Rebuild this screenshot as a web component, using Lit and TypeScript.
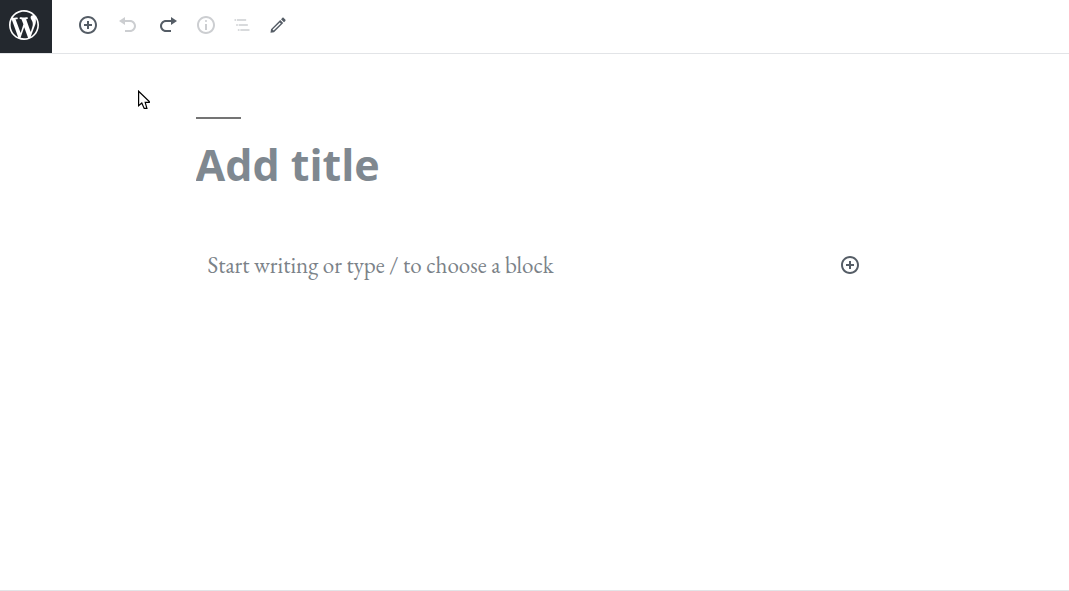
import { LitElement, html, css, svg } from "lit";
import { customElement, property } from "lit/decorators.js";

interface Glyph {
  box: number;
  path: string;
}

const glyphs: Record<string, Glyph> = {
  wordpress: {
    box: 20,
    path: "M20 10c0-5.51-4.49-10-10-10C4.48 0 0 4.49 0 10c0 5.52 4.48 10 10 10 5.51 0 10-4.48 10-10zM7.78 15.37L4.37 6.22c.55-.02 1.17-.08 1.17-.08.5-.06.44-1.13-.06-1.11 0 0-1.45.11-2.37.11-.18 0-.37 0-.58-.01C4.12 2.69 6.87 1.11 10 1.11c2.33 0 4.45.87 6.05 2.34-.68-.11-1.65.39-1.65 1.58 0 .74.45 1.36.9 2.1.35.61.55 1.36.55 2.46 0 1.49-1.4 5-1.4 5l-3.03-8.37c.54-.02.82-.17.82-.17.5-.05.44-1.25-.06-1.22 0 0-1.44.12-2.38.12-.87 0-2.33-.12-2.33-.12-.5-.03-.56 1.2-.06 1.22l.92.08 1.26 3.41zM17.41 10c.24-.64.74-1.87.43-4.25.7 1.29 1.05 2.71 1.05 4.25 0 3.29-1.73 6.24-4.4 7.78.97-2.59 1.94-5.2 2.92-7.78zM6.1 18.09C3.12 16.65 1.11 13.53 1.11 10c0-1.3.23-2.48.72-3.59C3.25 10.3 4.67 14.2 6.1 18.09zm4.03-6.63l2.58 6.98c-.86.29-1.76.45-2.71.45-.79 0-1.57-.11-2.29-.33.81-2.38 1.62-4.74 2.42-7.1z",
  },
  insert: {
    box: 20,
    path: "M10 1c-5 0-9 4-9 9s4 9 9 9 9-4 9-9-4-9-9-9zm0 16c-3.9 0-7-3.1-7-7s3.1-7 7-7 7 3.1 7 7-3.1 7-7 7zm1-11H9v3H6v2h3v3h2v-3h3V9h-3V6z",
  },
  undo: {
    box: 20,
    path: "M12 5H7V2L1 6l6 4V7h5c2.2 0 4 1.8 4 4s-1.8 4-4 4H7v2h5c3.3 0 6-2.7 6-6s-2.7-6-6-6z",
  },
  redo: {
    box: 20,
    path: "M8 5h5V2l6 4-6 4V7H8c-2.2 0-4 1.8-4 4s1.8 4 4 4h5v2H8c-3.3 0-6-2.7-6-6s2.7-6 6-6z",
  },
  info: {
    box: 20,
    path: "M9 15h2V9H9v6zm1-10c-.5 0-1 .5-1 1s.5 1 1 1 1-.5 1-1-.5-1-1-1zm0-4c-5 0-9 4-9 9s4 9 9 9 9-4 9-9-4-9-9-9zm0 16c-3.9 0-7-3.1-7-7s3.1-7 7-7 7 3.1 7 7-3.1 7-7 7z",
  },
  outline: {
    box: 24,
    path: "M5 5H3v2h2V5zm3 8h11v-2H8v2zm9-8H6v2h11V5zM7 11H5v2h2v-2zm0 8h2v-2H7v2zm3-2v2h11v-2H10z",
  },
  edit: {
    box: 20,
    path: "M14.3 2.9c.4-.4 1-.4 1.4 0l1.6 1.6c.4.4.4 1 0 1.4L16 7.2 13 4.2l1.3-1.3zM12.2 5l3 3L6 17.2l-3.5.5.5-3.5L12.2 5zm-.4 2.4L4.6 14.6l1 1 7.2-7.2-1-1z",
  },
};

@customElement("editor-icon")
export class EditorIcon extends LitElement {
  @property() name = "insert";

  static styles = css`
    :host {
      display: block;
      width: 20px;
      height: 20px;
    }
    .glyph {
      display: block;
      width: 100%;
      height: 100%;
      fill: currentColor;
    }
  `;

  render() {
    const g = glyphs[this.name];
    return html`<svg class="glyph" viewBox="0 0 ${g.box} ${g.box}" aria-hidden="true">
      ${svg`<path fill-rule="evenodd" d=${g.path}></path>`}
    </svg>`;
  }
}

@customElement("app-root")
export class AppRoot extends LitElement {
  static styles = css`
    :host {
      display: flex;
      flex-direction: column;
      box-sizing: border-box;
      min-height: 100vh;
      background: #fff;
      border-bottom: 1px solid #e2e4e7;
      color: #555d66;
      font-family: "Open Sans", "Noto Sans", sans-serif;
    }
    .header {
      display: flex;
      border-bottom: 1px solid #e2e4e7;
    }
    .home {
      display: flex;
      box-sizing: border-box;
      width: 52px;
      height: 53px;
      padding: 10px 9px;
      background: #23282e;
      color: #fff;
    }
    .home editor-icon {
      width: 30px;
      height: 30px;
    }
    .tools {
      display: flex;
      align-items: flex-start;
      padding: 7px 16px;
    }
    .tool {
      display: flex;
      align-items: center;
      justify-content: center;
      width: 36px;
      height: 36px;
      padding: 0;
      border: 0;
      background: none;
      color: #555d66;
    }
    .history {
      width: 40px;
    }
    .tool:disabled {
      color: #ccced1;
    }
    .canvas {
      flex: 1;
      box-sizing: border-box;
      width: 100%;
      max-width: 678px;
      margin: 0 auto;
      padding-top: 63px;
    }
    .rule {
      width: 45px;
      height: 2px;
      margin: 0;
      border: 0;
      background: #747474;
    }
    .title,
    .text {
      box-sizing: border-box;
      min-width: 0;
      padding: 0;
      border: 0;
      outline: 0;
      background: none;
    }
    .title {
      display: block;
      width: 100%;
      height: 60px;
      margin-top: 16px;
      color: #23282e;
      font: 700 43px/60px "Open Sans", "Noto Sans", sans-serif;
    }
    .title::placeholder {
      color: #7f8890;
      opacity: 1;
    }
    .block {
      display: flex;
      align-items: center;
      margin-top: 52px;
      padding: 0 6px 0 12px;
    }
    .text {
      flex: 1;
      height: 36px;
      color: #23282e;
      font: 400 23px/36px "EB Garamond", "Liberation Serif", serif;
    }
    .text::placeholder {
      color: #7b8288;
      opacity: 1;
    }
    .pointer {
      position: absolute;
      left: 138px;
      top: 90px;
      width: 13px;
      height: 20px;
      pointer-events: none;
    }
  `;

  render() {
    return html`
      <header class="header">
        <a class="home" href="#" aria-label="View posts"><editor-icon name="wordpress"></editor-icon></a>
        <div class="tools" role="toolbar" aria-label="Document tools">
          <button class="tool history" aria-label="Add block"><editor-icon name="insert"></editor-icon></button>
          <button class="tool history" aria-label="Undo" disabled><editor-icon name="undo"></editor-icon></button>
          <button class="tool history" aria-label="Redo"><editor-icon name="redo"></editor-icon></button>
          <button class="tool" aria-label="Content structure" disabled><editor-icon name="info"></editor-icon></button>
          <button class="tool" aria-label="Block navigation" disabled><editor-icon name="outline"></editor-icon></button>
          <button class="tool" aria-label="Edit mode"><editor-icon name="edit"></editor-icon></button>
        </div>
      </header>
      <main class="canvas">
        <hr class="rule" />
        <input class="title" type="text" placeholder="Add title" aria-label="Add title" />
        <div class="block">
          <input
            class="text"
            type="text"
            placeholder="Start writing or type / to choose a block"
            aria-label="Paragraph block"
          />
          <button class="tool" aria-label="Add block here"><editor-icon name="insert"></editor-icon></button>
        </div>
      </main>
      <svg class="pointer" viewBox="0 0 13 20" aria-hidden="true">
        <path
          d="M.6 1.2V15.8L3.8 13 6.2 18.4H8.9L7.2 12.4H11.3V11.6Z"
          fill="#fff"
          stroke="#000"
          stroke-width="1.2"
        ></path>
      </svg>
    `;
  }
}
